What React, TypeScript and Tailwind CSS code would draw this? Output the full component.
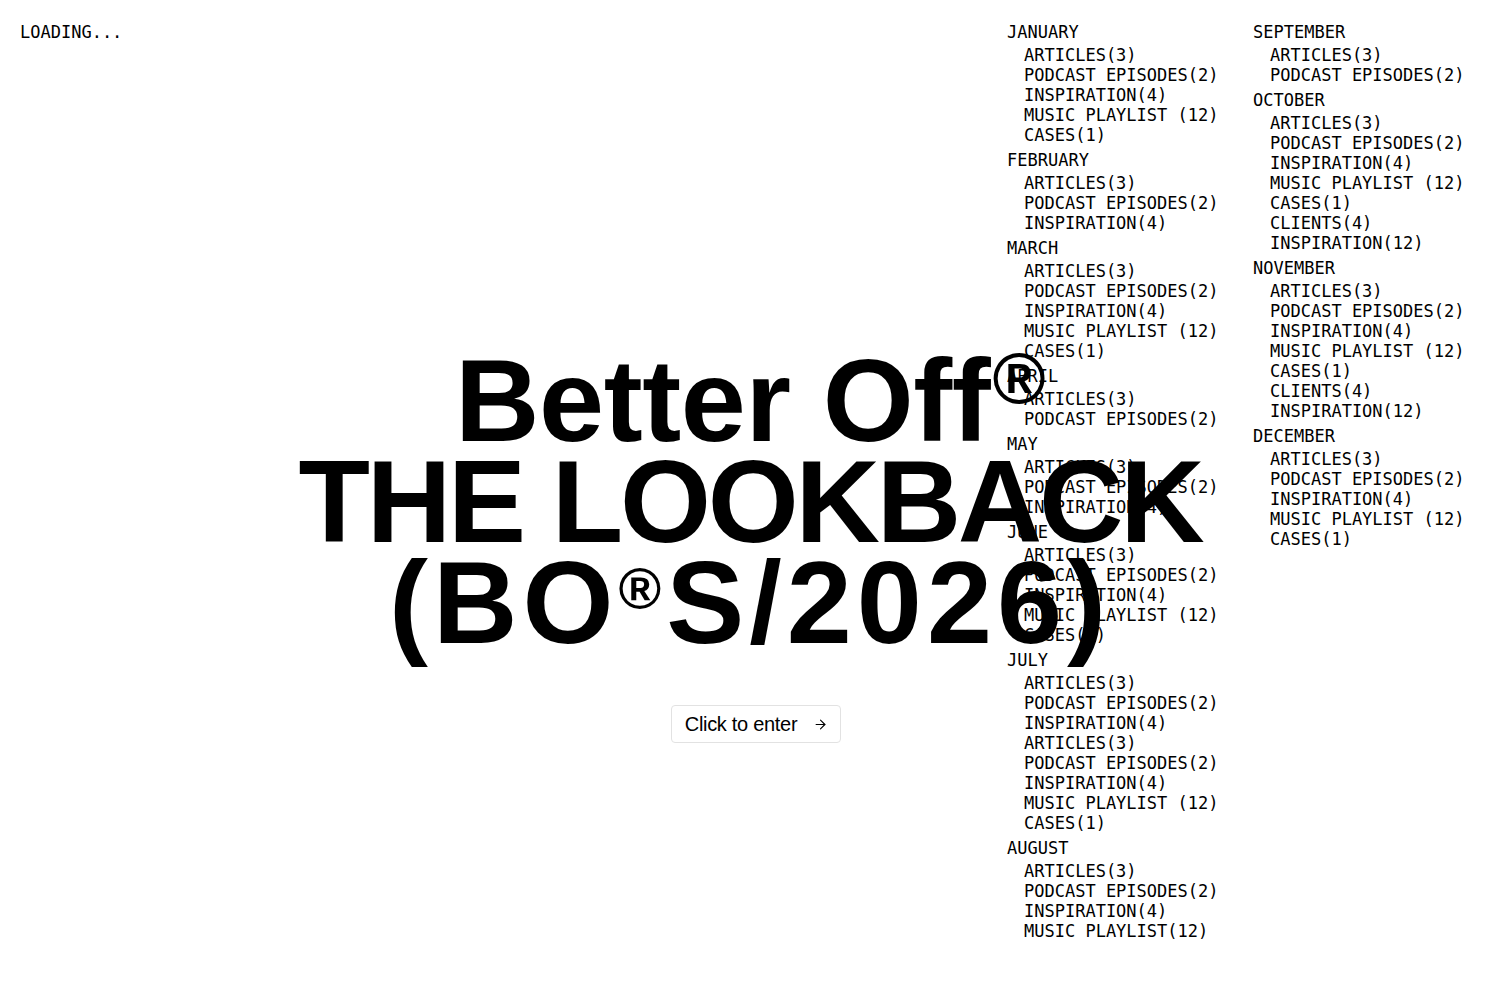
import { ArrowRight } from 'lucide-react';

interface Month {
  name: string;
  items: string[];
}

const columnOne: Month[] = [
  { name: 'JANUARY', items: ['ARTICLES(3)', 'PODCAST EPISODES(2)', 'INSPIRATION(4)', 'MUSIC PLAYLIST (12)', 'CASES(1)'] },
  { name: 'FEBRUARY', items: ['ARTICLES(3)', 'PODCAST EPISODES(2)', 'INSPIRATION(4)'] },
  { name: 'MARCH', items: ['ARTICLES(3)', 'PODCAST EPISODES(2)', 'INSPIRATION(4)', 'MUSIC PLAYLIST (12)', 'CASES(1)'] },
  { name: 'APRIL', items: ['ARTICLES(3)', 'PODCAST EPISODES(2)'] },
  { name: 'MAY', items: ['ARTICLES(3)', 'PODCAST EPISODES(2)', 'INSPIRATION(4)'] },
  { name: 'JUNE', items: ['ARTICLES(3)', 'PODCAST EPISODES(2)', 'INSPIRATION(4)', 'MUSIC PLAYLIST (12)', 'CASES(1)'] },
  {
    name: 'JULY',
    items: [
      'ARTICLES(3)',
      'PODCAST EPISODES(2)',
      'INSPIRATION(4)',
      'ARTICLES(3)',
      'PODCAST EPISODES(2)',
      'INSPIRATION(4)',
      'MUSIC PLAYLIST (12)',
      'CASES(1)',
    ],
  },
  { name: 'AUGUST', items: ['ARTICLES(3)', 'PODCAST EPISODES(2)', 'INSPIRATION(4)', 'MUSIC PLAYLIST(12)'] },
];

const columnTwo: Month[] = [
  { name: 'SEPTEMBER', items: ['ARTICLES(3)', 'PODCAST EPISODES(2)'] },
  {
    name: 'OCTOBER',
    items: ['ARTICLES(3)', 'PODCAST EPISODES(2)', 'INSPIRATION(4)', 'MUSIC PLAYLIST (12)', 'CASES(1)', 'CLIENTS(4)', 'INSPIRATION(12)'],
  },
  {
    name: 'NOVEMBER',
    items: ['ARTICLES(3)', 'PODCAST EPISODES(2)', 'INSPIRATION(4)', 'MUSIC PLAYLIST (12)', 'CASES(1)', 'CLIENTS(4)', 'INSPIRATION(12)'],
  },
  { name: 'DECEMBER', items: ['ARTICLES(3)', 'PODCAST EPISODES(2)', 'INSPIRATION(4)', 'MUSIC PLAYLIST (12)', 'CASES(1)'] },
];

function MonthColumn({ months }: { months: Month[] }) {
  return (
    <div className="flex flex-col gap-[5px]">
      {months.map((month) => (
        <div key={month.name}>
          <div className="mb-[3px] whitespace-pre">{month.name}</div>
          <ul className="pl-[17px]">
            {month.items.map((item, i) => (
              <li key={i} className="whitespace-pre">
                {item}
              </li>
            ))}
          </ul>
        </div>
      ))}
    </div>
  );
}

export default function App() {
  return (
    <div className="relative h-[1000px] w-full overflow-hidden bg-white text-black">
      {/* index + archive list */}
      <div className="flex justify-between pt-[22px] font-['DejaVu_Sans_Mono',monospace] text-[17px] leading-[20px]">
        <div className="pl-[20px]">LOADING...</div>
        <div className="grid w-[493px] grid-cols-[246px_247px]">
          <MonthColumn months={columnOne} />
          <MonthColumn months={columnTwo} />
        </div>
      </div>

      {/* title overlay */}
      <div className="absolute inset-x-0 top-[350px] flex flex-col items-center font-['Liberation_Sans',Arial,sans-serif]">
        <h1 className="text-center text-[117px] font-bold leading-[101px]">
          <div className="tracking-[-0.4px]">
            Better Off<span className="relative -top-[38px] ml-[2px] align-baseline text-[72px] leading-[0]">®</span>
          </div>
          <div className="tracking-[-3.3px]">THE LOOKBACK</div>
          <div className="tracking-[5px]">
            (BO<span className="relative -top-[34px] align-baseline text-[58px] leading-[0]">®</span>S/2026)
          </div>
        </h1>
        <button className="mt-[52px] ml-[12px] flex h-[38px] items-center gap-[16px] rounded-[4px] border border-[#e2e2e2] pl-[13px] pr-[12px] text-[20px] tracking-[-0.3px]">
          <span>Click to enter</span>
          <ArrowRight className="h-[15px] w-[15px]" strokeWidth={1.75} />
        </button>
      </div>
    </div>
  );
}
